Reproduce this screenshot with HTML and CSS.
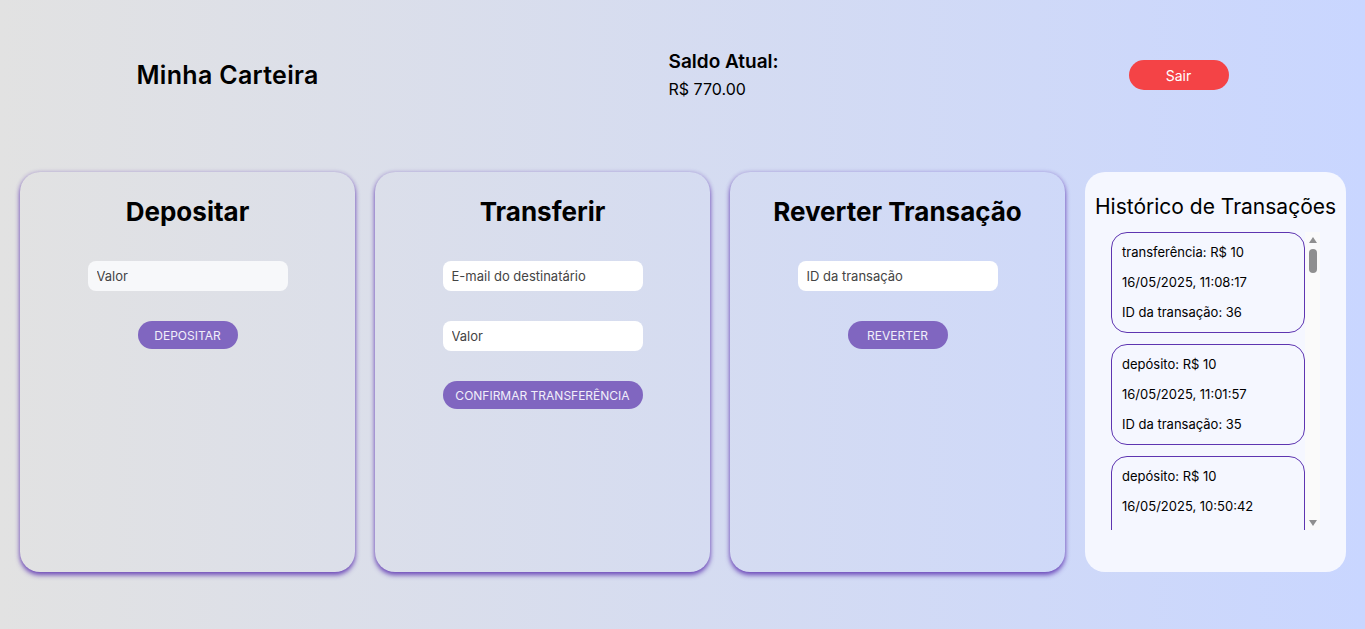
FILE: index.html
```html
<!DOCTYPE html>
<html lang="pt-BR">
<head>
<meta charset="utf-8">
<title>Minha Carteira</title>
<link rel="stylesheet" href="styles.css">
</head>
<body>
<header class="topbar">
  <h1 class="brand">Minha Carteira</h1>
  <div class="balance">
    <h3 class="balance-label">Saldo Atual:</h3>
    <p class="balance-value">R$ 770.00</p>
  </div>
  <button class="logout">Sair</button>
</header>
<main class="board">
  <section class="card">
    <h2 class="card-title">Depositar</h2>
    <div class="form">
      <input class="field field-focus" type="text" placeholder="Valor">
      <button class="action">DEPOSITAR</button>
    </div>
  </section>
  <section class="card">
    <h2 class="card-title">Transferir</h2>
    <div class="form">
      <input class="field" type="text" placeholder="E-mail do destinatário">
      <input class="field" type="text" placeholder="Valor">
      <button class="action action-wide">CONFIRMAR TRANSFERÊNCIA</button>
    </div>
  </section>
  <section class="card">
    <h2 class="card-title">Reverter Transação</h2>
    <div class="form">
      <input class="field" type="text" placeholder="ID da transação">
      <button class="action">REVERTER</button>
    </div>
  </section>
  <aside class="history">
    <h2 class="history-title">Histórico de Transações</h2>
    <div class="history-box">
      <div class="history-list">
        <div class="tx"><p>transferência: R$ 10</p><p>16/05/2025, 11:08:17</p><p>ID da transação: 36</p></div>
        <div class="tx"><p>depósito: R$ 10</p><p>16/05/2025, 11:01:57</p><p>ID da transação: 35</p></div>
        <div class="tx"><p>depósito: R$ 10</p><p>16/05/2025, 10:50:42</p><p>ID da transação: 34</p></div>
      </div>
      <div class="scrollbar" aria-hidden="true">
        <span class="arrow-up"></span>
        <span class="thumb"></span>
        <span class="track-fill"></span>
        <span class="arrow-down"></span>
      </div>
    </div>
  </aside>
</main>
</body>
</html>
```
FILE: styles.css
```css
* { box-sizing: border-box; }
html, body { height: 100%; }
body {
  margin: 0;
  font-family: Inter, "Liberation Sans", sans-serif;
  color: #000;
  background: linear-gradient(to right, #e2e2e2, #c9d6ff);
  overflow: hidden;
}
.topbar {
  height: 150px;
  padding: 0 10%;
  display: flex;
  align-items: center;
  justify-content: space-between;
}
.brand {
  margin: 0;
  font-size: 25px;
  font-weight: 600;
  letter-spacing: 0.3px;
}
.balance-label {
  margin: 0;
  font-size: 19px;
  font-weight: 600;
  line-height: 24px;
}
.balance-value {
  margin: 4px 0 0;
  font-size: 16px;
  line-height: 22px;
}
.logout {
  width: 100px;
  height: 30px;
  border: none;
  border-radius: 15px;
  background: #f44346;
  color: #fff;
  font-family: inherit;
  font-size: 14px;
}
.board {
  display: flex;
  gap: 20px;
  padding: 22px 19px 0 20px;
}
.card {
  width: 335px;
  height: 400px;
  border-radius: 20px;
  padding-top: 20px;
  box-shadow: 0 3px 5px rgba(94, 53, 177, 0.85), 0 0 4px rgba(94, 53, 177, 0.25);
}
.card-title {
  margin: 0 0 29px;
  text-align: center;
  font-size: 26px;
  font-weight: 700;
  line-height: 40px;
}
.form {
  display: flex;
  flex-direction: column;
  align-items: center;
  gap: 30px;
}
.field {
  width: 200px;
  height: 30px;
  border: none;
  border-radius: 8px;
  background: #fff;
  padding: 0 9px;
  font-family: inherit;
  font-size: 13px;
  outline: none;
}
.field::placeholder { color: #444; }
.field-focus { background: #f7f8fa; }
.action {
  width: 100px;
  height: 28px;
  border: none;
  border-radius: 14px;
  background: #8066c0;
  color: #f1eefa;
  font-family: inherit;
  font-size: 12px;
}
.action-wide { width: 200px; }
.history {
  width: 261px;
  height: 400px;
  border-radius: 20px;
  background: #f5f7ff;
  padding-top: 20px;
  display: flex;
  flex-direction: column;
  align-items: center;
}
.history-title {
  margin: 0 0 10px;
  font-size: 21px;
  font-weight: 400;
  line-height: 30px;
}
.history-box {
  display: flex;
  width: 209px;
  height: 298px;
}
.history-list {
  width: 194px;
  height: 100%;
  overflow: hidden;
}
.scrollbar {
  width: 15px;
  height: 100%;
  background: #fafafa;
  display: flex;
  flex-direction: column;
  align-items: center;
  padding: 5px 0 4px;
}
.arrow-up, .arrow-down {
  width: 0;
  height: 0;
  border-left: 4.5px solid transparent;
  border-right: 4.5px solid transparent;
}
.arrow-up { border-bottom: 6px solid #8f8f8f; }
.arrow-down { border-top: 6px solid #8f8f8f; }
.thumb {
  width: 8px;
  height: 24px;
  margin-top: 6px;
  border-radius: 4px;
  background: #8f8f8f;
}
.track-fill { flex: 1; }
.tx {
  border: 1px solid #5e35b1;
  border-radius: 16px;
  padding: 0 10px;
  margin-bottom: 11px;
}
.tx p {
  margin: 9px 0;
  font-size: 13px;
  line-height: 21px;
}
```
